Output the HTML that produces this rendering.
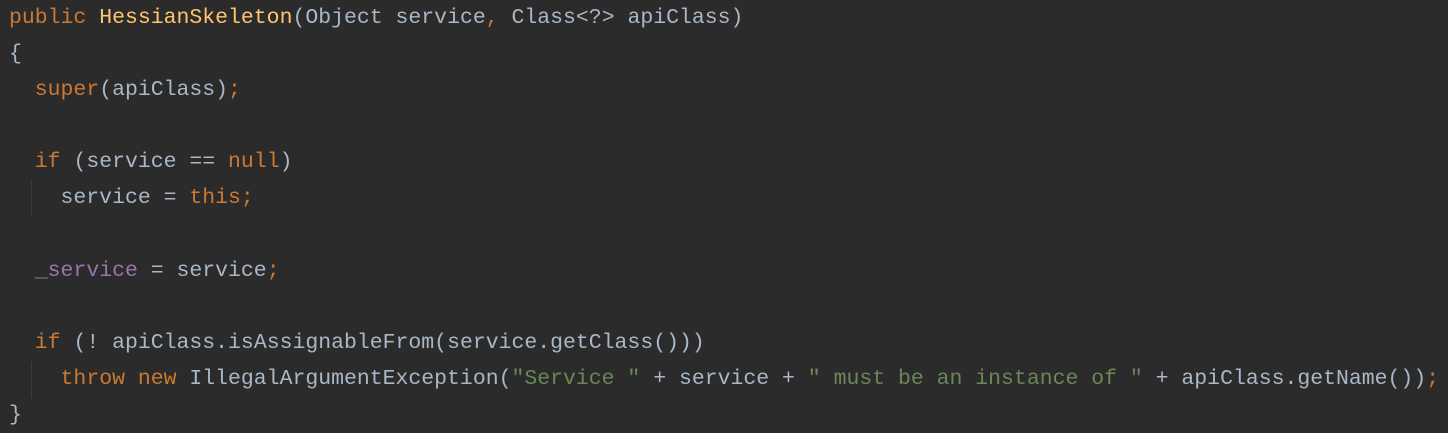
<!DOCTYPE html>
<html><head><style>
body{margin:0;background:#2b2b2b;width:1448px;height:433px;overflow:hidden;position:relative}
pre{margin:0;position:absolute;left:9px;top:0px;font-family:"Liberation Mono",monospace;font-size:21.47px;line-height:36.1px;color:#a9b7c6}
.k{color:#cc7832}.m{color:#ffc66d}.s{color:#6a8759}.f{color:#9876aa}
.g{position:absolute;left:31px;width:1px;background:#3b3b3b;height:36px}
</style></head><body>
<div class="g" style="top:180px"></div>
<div class="g" style="top:362px"></div>
<pre><span class="k">public</span> <span class="m">HessianSkeleton</span>(Object service<span class="k">,</span> Class&lt;?&gt; apiClass)
{
  <span class="k">super</span>(apiClass)<span class="k">;</span>

  <span class="k">if</span> (service == <span class="k">null</span>)
    service = <span class="k">this;</span>

  <span class="f">_service</span> = service<span class="k">;</span>

  <span class="k">if</span> (! apiClass.isAssignableFrom(service.getClass()))
    <span class="k">throw new</span> IllegalArgumentException(<span class="s">"Service "</span> + service + <span class="s">" must be an instance of "</span> + apiClass.getName())<span class="k">;</span>
}</pre>
</body></html>
